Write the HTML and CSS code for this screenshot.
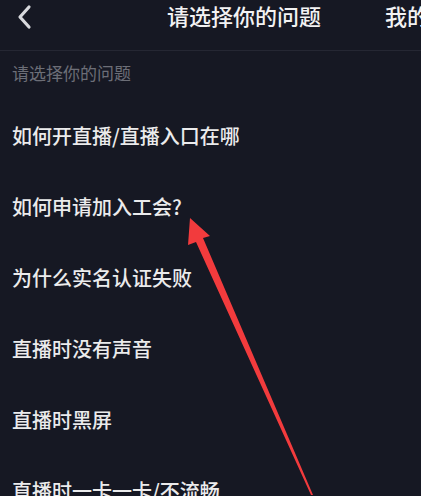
FILE: index.html
```html
<!DOCTYPE html>
<html lang="zh-CN">
<head>
    <meta charset="UTF-8">
    <meta name="viewport" content="width=device-width, initial-scale=1.0">
    <title>请选择你的问题</title>
    <link rel="stylesheet" href="styles.css">
</head>
<body>

    <!-- Thanh tiêu đề -->
    <div class="top-bar">
        <div class="back-btn">
            <svg width="18" height="26" viewBox="0 0 18 26">
                <path d="M14 3 L5 13 L14 23" fill="none" stroke="#d8d9dd" stroke-width="3.2" stroke-linecap="round" stroke-linejoin="round"/>
            </svg>
        </div>
        <div class="tabs">
            <span class="tab active">请选择你的问题</span>
            <span class="tab">我的反馈</span>
        </div>
    </div>

    <p class="section-title">请选择你的问题</p>

    <!-- Danh sách câu hỏi -->
    <ul class="question-list">
        <li>如何开直播/直播入口在哪</li>
        <li>如何申请加入工会?</li>
        <li>为什么实名认证失败</li>
        <li>直播时没有声音</li>
        <li>直播时黑屏</li>
        <li>直播时一卡一卡/不流畅</li>
    </ul>

    <!-- Mũi tên chỉ dẫn -->
    <svg class="pointer-arrow" width="421" height="496" viewBox="0 0 421 496">
        <polygon points="190,218 210,236 203,238 313,495 311,495 196,242 188,245" fill="#f23b3d"/>
    </svg>

</body>
</html>
```

FILE: styles.css
```css
/* Căn chỉnh chung */
body {
    margin: 0;
    background-color: #161823;
    color: #ebebec;
    font-family: "Noto Sans CJK SC", "Noto Sans", sans-serif;
    height: 100vh;
    overflow: hidden;
}

/* Thanh tiêu đề */
.top-bar {
    height: 50px;
    display: flex;
    align-items: center;
    border-bottom: 1px solid #252733;
    overflow: hidden;
}

.back-btn {
    width: 18px;
    height: 26px;
    margin-left: 15px;
    margin-top: -17px;
    display: flex;
}

.tabs {
    display: flex;
    gap: 64px;
    margin-left: 134px;
    margin-top: -20px;
    white-space: nowrap;
}

.tab {
    font-size: 22px;
    line-height: 26px;
    font-weight: 500;
    color: #f2f2f3;
}

/* Tiêu đề nhỏ */
.section-title {
    margin: 0;
    padding: 12px 12px 0;
    font-size: 17px;
    line-height: 20px;
    color: #6c6e77;
}

/* Danh sách câu hỏi */
.question-list {
    list-style: none;
    margin: 0;
    padding: 17px 0 0 12px;
}

.question-list li {
    height: 71px;
    line-height: 71px;
    font-size: 20px;
    font-weight: 500;
    white-space: nowrap;
}

/* Mũi tên đỏ nằm đè lên */
.pointer-arrow {
    position: absolute;
    top: 0;
    left: 0;
    pointer-events: none;
}
```
